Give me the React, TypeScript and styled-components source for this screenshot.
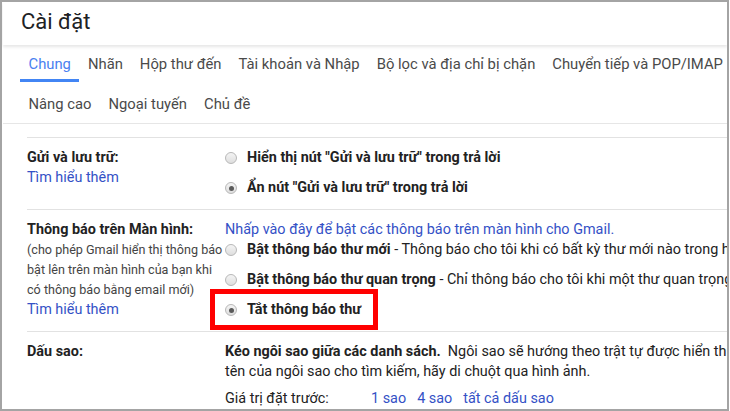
import React from "react";
import styled, {createGlobalStyle} from "styled-components";

const GlobalStyle = createGlobalStyle`
  body {
    margin: 0;
    background: #fff;
    overflow: hidden;
  }
`;

const Frame = styled.div`
  width: 729px;
  height: 411px;
  box-sizing: border-box;
  border: 2px solid #a4a4a4;
  background: #fff;
  overflow: hidden;
  font-family: Roboto, "Liberation Sans", Arial, sans-serif;
  color: #222;
`;

const Header = styled.div`
  height: 43px;
  box-sizing: border-box;
  padding: 0 0 4px 18px;
  display: flex;
  align-items: center;
  font-size: 22px;
  color: #202124;
  position: relative;
  z-index: 1;
  margin-left: 1px;
  box-shadow: 0 2px 3px rgba(0, 0, 0, 0.1);
`;

const TabBar = styled.div`
  padding-left: 17px;
  margin-left: 1px;
  border-bottom: 1px solid #e6e6e6;
`;

const TabRow = styled.div<{ $h: number; $pad?: number }>`
  display: flex;
  height: ${(p) => p.$h}px;
  box-sizing: border-box;
  padding-top: ${(p) => p.$pad ?? 0}px;
`;

const Tab = styled.div<{ $active?: boolean }>`
  display: flex;
  align-items: center;
  box-sizing: border-box;
  padding: 3px 8.5px 0;
  font-size: 14.8px;
  white-space: nowrap;
  color: ${(p) => (p.$active ? "#4a7ff0" : "#4a4a4a")};
  border-bottom: 3px solid ${(p) => (p.$active ? "#4285f4" : "transparent")};
`;

const Content = styled.div`
  padding: 13px 0 0 25px;
`;

const Section = styled.div`
  display: flex;
  border-top: 1px solid #e2e2e2;
  padding: 10px 0 11px;
  line-height: 20px;
  font-size: 14.4px;
`;

const LeftCol = styled.div`
  width: 198px;
  flex-shrink: 0;
  white-space: nowrap;
`;

const RightCol = styled.div`
  flex: 1;
  white-space: nowrap;
`;

const Label = styled.div`
  font-weight: bold;
  color: #222;
`;

const Note = styled.div`
  font-size: 12.6px;
  color: #444;
`;

const Link = styled.div<{ $inline?: boolean }>`
  display: ${(p) => (p.$inline ? "inline" : "block")};
  color: #3451c6;
  margin-right: ${(p) => (p.$inline ? "11px" : "0")};
`;

const Option = styled.div<{ $gap?: number }>`
  display: flex;
  align-items: center;
  height: 20px;
  margin-top: ${(p) => p.$gap ?? 0}px;
  position: relative;
`;

const Highlight = styled.div`
  position: absolute;
  left: -15px;
  top: -11px;
  width: 168px;
  height: 41px;
  box-sizing: border-box;
  border: 5px solid #f00;
`;

const Radio = styled.span<{ $checked?: boolean }>`
  width: 12px;
  height: 12px;
  box-sizing: border-box;
  border-radius: 50%;
  border: 1px solid #b8b8b8;
  background: linear-gradient(#f4f4f4, #dedede);
  margin-right: 10px;
  flex-shrink: 0;
  display: flex;
  align-items: center;
  justify-content: center;

  &::after {
    content: "";
    width: 5px;
    height: 5px;
    border-radius: 50%;
    background: #5a5a5a;
    display: ${(p) => (p.$checked ? "block" : "none")};
  }
`;

const Bold = styled.span`
  font-weight: bold;
`;

const Line = styled.div<{ $top?: number }>`
  margin-top: ${(p) => p.$top ?? 0}px;
`;

const Preset = styled.span`
  display: inline-block;
  width: 146px;
`;

export default function App() {
  return (
    <>
      <GlobalStyle />
      <Frame>
        <Header>Cài đặt</Header>
        <TabBar>
          <TabRow $h={37}>
            <Tab $active>Chung</Tab>
            <Tab>Nhãn</Tab>
            <Tab>Hộp thư đến</Tab>
            <Tab>Tài khoản và Nhập</Tab>
            <Tab>Bộ lọc và địa chỉ bị chặn</Tab>
            <Tab>Chuyển tiếp và POP/IMAP</Tab>
          </TabRow>
          <TabRow $h={41} $pad={3}>
            <Tab>Nâng cao</Tab>
            <Tab>Ngoại tuyến</Tab>
            <Tab>Chủ đề</Tab>
          </TabRow>
        </TabBar>

        <Content>
          <Section>
            <LeftCol>
              <Label>Gửi và lưu trữ:</Label>
              <Link>Tìm hiểu thêm</Link>
            </LeftCol>
            <RightCol>
              <Option>
                <Radio />
                <Bold>Hiển thị nút "Gửi và lưu trữ" trong trả lời</Bold>
              </Option>
              <Option $gap={10}>
                <Radio $checked />
                <Bold>Ẩn nút "Gửi và lưu trữ" trong trả lời</Bold>
              </Option>
            </RightCol>
          </Section>

          <Section>
            <LeftCol>
              <Label>Thông báo trên Màn hình:</Label>
              <Note>(cho phép Gmail hiển thị thông báo</Note>
              <Note>bật lên trên màn hình của bạn khi</Note>
              <Note>có thông báo bằng email mới)</Note>
              <Link>Tìm hiểu thêm</Link>
            </LeftCol>
            <RightCol>
              <Link>Nhấp vào đây để bật các thông báo trên màn hình cho Gmail.</Link>
              <Option>
                <Radio />
                <span>
                  <Bold>Bật thông báo thư mới</Bold> - Thông báo cho tôi khi có bất kỳ thư mới nào trong hộp thư đến
                </span>
              </Option>
              <Option $gap={10}>
                <Radio />
                <span>
                  <Bold>Bật thông báo thư quan trọng</Bold> - Chỉ thông báo cho tôi khi một thư quan trọng đến
                </span>
              </Option>
              <Option $gap={10}>
                <Highlight />
                <Radio $checked />
                <Bold>Tắt thông báo thư</Bold>
              </Option>
            </RightCol>
          </Section>

          <Section>
            <LeftCol>
              <Label>Dấu sao:</Label>
            </LeftCol>
            <RightCol>
              <Line>
                <Bold>Kéo ngôi sao giữa các danh sách.</Bold>&nbsp; Ngôi sao sẽ hướng theo trật tự được hiển thị bên dưới. Để tìm hiểu
              </Line>
              <Line>tên của ngôi sao cho tìm kiếm, hãy di chuột qua hình ảnh.</Line>
              <Line $top={7}>
                <Preset>Giá trị đặt trước:</Preset>
                <Link $inline>1 sao</Link>
                <Link $inline>4 sao</Link>
                <Link $inline>tất cả dấu sao</Link>
              </Line>
            </RightCol>
          </Section>
        </Content>
      </Frame>
    </>
  );
}
